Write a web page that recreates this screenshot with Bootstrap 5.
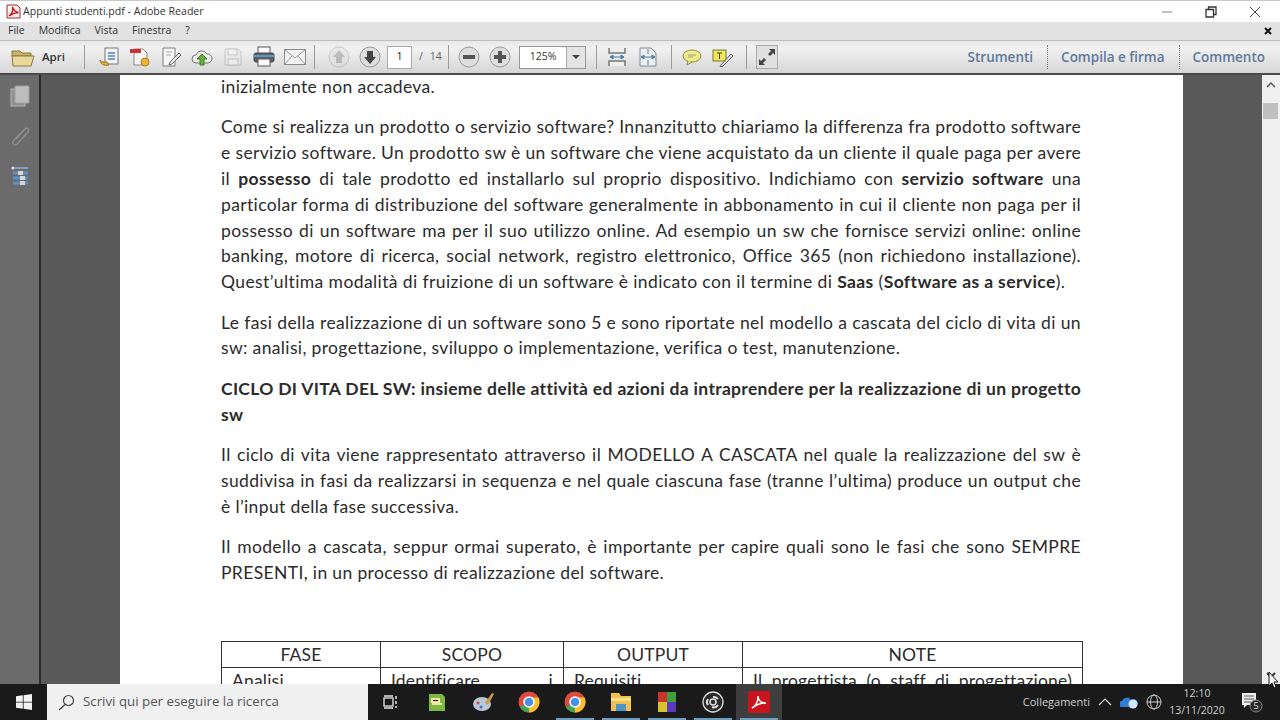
<!DOCTYPE html>
<html lang="it"><head><meta charset="utf-8"><title>Appunti studenti.pdf - Adobe Reader</title>
<link href="https://cdn.jsdelivr.net/npm/bootstrap@5.3.0/dist/css/bootstrap.min.css" rel="stylesheet">
<style>
html,body{height:100%;overflow:hidden;margin:0}
body{font-family:"Open Sans","Liberation Sans",sans-serif;background:#fff}
.shell{width:1280px;height:720px;position:relative}
.titlebar{height:22px;background:#fff;border-top:1px solid #c9c9c7;color:#333;font-size:10.6px;padding:0 3px 0 6px}
.titlebar svg{flex:none}
.titleicon{margin-right:2px}
.wbtn{width:44px;text-align:center;color:#444;line-height:1}
.menubar{height:18px;background:#e2e2e2;font-size:10.5px;color:#333;padding-left:8px;gap:14px}
.toolbar{height:35px;background:linear-gradient(#e9e9e9,#f1f1f1 25%,#d6d6d6);border-top:1px solid #bdbdbd;border-bottom:2px solid #4a4a4a;padding-left:7px}
.slot{width:31px;height:33px;flex:none}
.sepline{width:1px;height:24px;background:#9b9b9b;flex:none}
.sep-z{margin:0 4px 0 10px}
.apri{font-size:11.5px;font-weight:600;color:#333;width:42px;padding-left:4px;flex:none}
.pagebox{width:25px;height:23px;background:#fff;border:1px solid #aaa;font-size:10.5px;color:#222;flex:none;margin-left:2px}
.pageof{font-size:10.5px;color:#666;width:32px;padding-left:7px;flex:none;gap:7px}
.zoombox{width:67px;height:23px;background:#fff;border:1px solid #999;font-size:10.5px;color:#333;flex:none;margin-left:4px}
.zoomval{width:46px;text-align:center}
.zoomarrow{flex:1;height:100%;background:#e4e4e4;border-left:1px solid #aaa}
.tabs{font-size:13.5px;font-weight:600;color:#5f7a99;padding-right:15px;margin-left:auto}
.tabdiv{border-left:1px dotted #777;height:24px;margin:0 13px 0 14px}
.stage{height:609px;overflow:hidden}
.sidepanel{width:41px;background:#6b6b6b;border-right:2px solid #2b2b2b;flex:none;padding-top:10px;gap:18px}
.gutter{background:#595959;flex:none}
.gutter-l{width:79px}
.gutter-r{width:79px;margin-left:auto}
.sheet{width:1063px;background:#fff;flex:none}
.doc{width:860px;margin-left:101px;font-family:Lato,"Liberation Sans",sans-serif;font-size:17.5px;letter-spacing:.36px;line-height:25.8px;color:#2b2b2b;margin-top:-1px}
.tl{text-align:justify;text-align-last:justify;white-space:nowrap}
.tlast{white-space:nowrap}
.spaced{letter-spacing:.4px}
.boldpara{letter-spacing:.3px}
.para{margin-bottom:14.6px}
.doctable{width:861px;margin-top:55px;table-layout:fixed;border-collapse:collapse;color:#262626;margin-bottom:0}
.doctable td{border:1.5px solid #333;padding:1px 10px 0;height:25px;line-height:24px;background:#fff;color:#2b2b2b;letter-spacing:.2px}
.vscroll{width:18px;background:#f0f0f0;flex:none;padding:6px 0 5px}
.vthumb{width:15px;height:16px;background:#c0c0c0;margin:14px 0 0 1px}
.taskbar{height:36px;background:#1a1a1a;color:#ddd}
.winbox{width:47px;flex:none}
.searchbox{width:321px;height:100%;background:#f0f0f0;color:#555;font-size:13.3px;padding-left:11px;gap:8px;flex:none}
.tb{width:46px;height:100%;flex:none;position:relative}
.tb-active{background:#3e3e3e}
.tb-run::after{content:"";position:absolute;left:4px;right:4px;bottom:0;height:2px;background:#6f9dbd}
.tray{margin-left:auto;height:100%;font-size:11px;color:#ccc}
.clock{font-size:10.5px;line-height:17px;text-align:center;width:70px}
.cursorpin{position:absolute;left:1268px;top:671px}
</style></head><body>
<div class="shell d-flex flex-column">
 <div class="titlebar d-flex align-items-center">
  <svg width="15" height="15" viewBox="0 0 15 15" class="titleicon"><path d="M1 1h10l3 3v10H1z" fill="#fbeeee" stroke="#a52a2a"/><path d="M3 12c3-2 4-6 3.500-9 1 3 3 5 6 5.500-3 0-6 1-9.500 3.500z" fill="none" stroke="#c01a1a" stroke-width="1.300"/></svg>
  <span>Appunti studenti.pdf - Adobe Reader</span>
  <div class="ms-auto d-flex align-items-center">
   <div class="wbtn"><svg width="10" height="10"><path d="M0 5h10" stroke="#aaa" stroke-width="1.500"/></svg></div>
   <div class="wbtn"><svg width="12" height="12"><path d="M1 3.500h7.500V11H1zM3.500 3V1H11v7.500H9" fill="none" stroke="#333" stroke-width="1.300"/></svg></div>
   <div class="wbtn"><svg width="12" height="12"><path d="M1 1l10 10M11 1L1 11" stroke="#444" stroke-width="1"/></svg></div>
  </div>
 </div>
 <div class="menubar d-flex align-items-center">
  <span>File</span><span>Modifica</span><span>Vista</span><span>Finestra</span><span>?</span>
  <svg class="ms-auto me-2" width="8" height="8"><path d="M1 1l6 6M7 1L1 7" stroke="#111" stroke-width="2"/></svg>
 </div>
 <div class="toolbar d-flex align-items-center">
  <div class="slot d-flex align-items-center justify-content-center"><svg width="24" height="20" viewBox="0 0 24 20"><path d="M1 4h8l2 2h9v3H1z" fill="#c9b26a" stroke="#8a7a3a"/><path d="M1 9h22l-3 10H2z" fill="#ead99a" stroke="#8a7a3a"/></svg></div>
  <div class="apri">Apri</div>
  <div class="sepline ms-1 me-2"></div>
  <div class="slot d-flex align-items-center justify-content-center"><svg width="22" height="22" viewBox="0 0 22 22"><rect x="7" y="2" width="13" height="16" fill="#f4f4f4" stroke="#777"/><path d="M10 7h7M10 10h7M10 13h7" stroke="#4a7fc0" stroke-width="1.500"/><path d="M2 14c0 4 4 6 9 5l-2-3h-4c-1 0-2-1-3-2z" fill="#e5b33c" stroke="#9a7420"/></svg></div>
  <div class="slot d-flex align-items-center justify-content-center"><svg width="22" height="22" viewBox="0 0 22 22"><path d="M5 3h9l4 4v12H5z" fill="#f6f6f6" stroke="#888"/><rect x="1" y="3" width="11" height="4" fill="#c8333a"/><circle cx="16" cy="16" r="4" fill="#eeb335" stroke="#b08020"/></svg></div>
  <div class="slot d-flex align-items-center justify-content-center"><svg width="22" height="22" viewBox="0 0 22 22"><path d="M3 2h12v18H3z" fill="#f7f7f7" stroke="#7b7b7b"/><path d="M6 6h6M6 9h5" stroke="#aaa"/><path d="M10 16l9-9 2 2-9 9-3 1z" fill="#e9e9e9" stroke="#666"/></svg></div>
  <div class="slot d-flex align-items-center justify-content-center"><svg width="22" height="20" viewBox="0 0 22 20"><path d="M5 16a4 4 0 0 1 0-8 6 6 0 0 1 11-1 4.500 4.500 0 0 1 1 9z" fill="#eee" stroke="#777"/><path d="M11 7l5 5h-3v6H9v-6H6z" fill="#66b13c" stroke="#3d7f20"/></svg></div>
  <div class="slot d-flex align-items-center justify-content-center"><svg width="20" height="20" viewBox="0 0 20 20" opacity=".45"><path d="M2 2h13l3 3v13H2z" fill="#e8e8e8" stroke="#999"/><rect x="5" y="2" width="9" height="6" fill="#f6f6f6" stroke="#999"/><rect x="5" y="12" width="10" height="6" fill="#f6f6f6" stroke="#999"/></svg></div>
  <div class="slot d-flex align-items-center justify-content-center"><svg width="22" height="22" viewBox="0 0 22 22"><rect x="5" y="1" width="12" height="7" fill="#fff" stroke="#555"/><rect x="1" y="7" width="20" height="9" rx="2" fill="#5a6068" stroke="#444"/><rect x="5" y="13" width="12" height="7" fill="#fff" stroke="#555"/><path d="M1 10h20" stroke="#5e94c8" stroke-width="2"/></svg></div>
  <div class="slot d-flex align-items-center justify-content-center"><svg width="22" height="16" viewBox="0 0 22 16"><rect x=".5" y=".5" width="21" height="15" fill="#f2f2f2" stroke="#8a8a8a"/><path d="M1 1l10 8 10-8M1 15l7-8M21 15l-7-8" fill="none" stroke="#9a9a9a"/></svg></div>
  <div class="sepline ms-1 me-2"></div>
  <div class="slot d-flex align-items-center justify-content-center"><svg width="22" height="22" viewBox="0 0 22 22" opacity=".4"><circle cx="11" cy="11" r="10" fill="#dedede" stroke="#999"/><path d="M11 4l6 7h-3v6H8v-6H5z" fill="#777"/></svg></div>
  <div class="slot d-flex align-items-center justify-content-center"><svg width="22" height="22" viewBox="0 0 22 22"><circle cx="11" cy="11" r="10" fill="#dedede" stroke="#999"/><path d="M11 18l-6-7h3V5h6v6h3z" fill="#444"/></svg></div>
  <div class="pagebox d-flex align-items-center justify-content-center">1</div>
  <div class="pageof d-flex align-items-center"><span>/</span><span>14</span></div>
  <div class="sepline ms-1 me-1"></div>
  <div class="slot d-flex align-items-center justify-content-center"><svg width="22" height="22" viewBox="0 0 22 22"><circle cx="11" cy="11" r="10" fill="#dedede" stroke="#999"/><rect x="5" y="9" width="12" height="4" fill="#555"/></svg></div>
  <div class="slot d-flex align-items-center justify-content-center"><svg width="22" height="22" viewBox="0 0 22 22"><circle cx="11" cy="11" r="10" fill="#dedede" stroke="#999"/><path d="M9 5h4v4h4v4h-4v4H9v-4H5V9h4z" fill="#555"/></svg></div>
  <div class="zoombox d-flex align-items-center"><span class="zoomval">125%</span><span class="zoomarrow d-flex align-items-center justify-content-center"><svg width="8" height="5"><path d="M0 0h8L4 4z" fill="#444"/></svg></span></div>
  <div class="sepline sep-z"></div>
  <div class="slot d-flex align-items-center justify-content-center"><svg width="18" height="20" viewBox="0 0 18 20"><path d="M1 1v5h16V1M1 19v-5h16v5" fill="#eee" stroke="#777" stroke-width="1.500"/><path d="M2 10h14M2 10l3-2v4zM16 10l-3-2v4z" stroke="#4f7fae" fill="#4f7fae"/></svg></div>
  <div class="slot d-flex align-items-center justify-content-center"><svg width="18" height="20" viewBox="0 0 18 20"><path d="M1 1h11l5 5v13H1z" fill="#eee" stroke="#7a8a9a"/><path d="M2 10h14M2 10l3-2v4zM16 10l-3-2v4zM9 2v5M9 13v5" stroke="#4f7fae" fill="#4f7fae"/></svg></div>
  <div class="sepline ms-2 me-1"></div>
  <div class="slot d-flex align-items-center justify-content-center"><svg width="20" height="17" viewBox="0 0 20 17"><ellipse cx="10" cy="7" rx="9" ry="6" fill="#f3ee83" stroke="#8c8c50"/><path d="M6 12l-1 4 5-3" fill="#f3ee83" stroke="#8c8c50"/><path d="M6 6h8M6 8h5" stroke="#999"/></svg></div>
  <div class="slot d-flex align-items-center justify-content-center"><svg width="22" height="19" viewBox="0 0 22 19"><rect x="1" y="2" width="13" height="11" fill="#efe65a" stroke="#77773a"/><path d="M5 5h5M7.500 5v6" stroke="#444"/><path d="M9 17l10-11 2 2-10 10-3 1z" fill="#ddd" stroke="#666"/></svg></div>
  <div class="sepline ms-2 me-1"></div>
  <div class="slot d-flex align-items-center justify-content-center"><svg width="22" height="24" viewBox="0 0 22 24"><rect x=".5" y=".5" width="21" height="23" fill="#e0e0e0" stroke="#aaa"/><path d="M13 4h6v6l-2-2-3 3-2-2 3-3zM9 20H3v-6l2 2 3-3 2 2-3 3z" fill="#444"/></svg></div>
  <div class="tabs d-flex align-items-center"><span>Strumenti</span><span class="tabdiv"></span><span>Compila e firma</span><span class="tabdiv"></span><span>Commento</span></div>
 </div>
 <div class="stage d-flex">
  <div class="sidepanel d-flex flex-column align-items-center">
   <svg width="20" height="22" viewBox="0 0 20 22"><rect x="1" y="4" width="14" height="17" fill="#8f8f8f" stroke="#b5b5b5"/><rect x="5" y="1" width="14" height="17" rx="1" fill="#bdbdbd" stroke="#a0a0a0"/></svg>
   <svg width="20" height="22" viewBox="0 0 20 22"><path d="M16 3L4 15c-3 4 1 6 3 4L18 7c2-3-1-5-3-3L6 14" fill="none" stroke="#909090" stroke-width="1.300"/></svg>
   <svg width="20" height="22" viewBox="0 0 20 22"><path d="M5 3h13" stroke="#8fb0d8" stroke-width="1.500"/><circle cx="3" cy="3" r="1.500" fill="#dfe7f0"/><path d="M3 8h15M3 13h15M3 18h15" stroke="#5f8fc8" stroke-width="3"/><rect x="8" y="6" width="5" height="4" fill="#d6d6d6"/><rect x="10" y="11" width="5" height="4" fill="#d6d6d6"/><rect x="10" y="16" width="5" height="4" fill="#d6d6d6"/></svg>
  </div>
  <div class="gutter gutter-l"></div>
  <div class="sheet">
   <div class="doc">
    <div class="para tlast">inizialmente non accadeva.</div>
    <div class="para">
     <div class="tl">Come si realizza un prodotto o servizio software?  Innanzitutto chiariamo la differenza fra prodotto software</div>
     <div class="tl">e servizio software. Un prodotto sw è un software che viene acquistato da un cliente il quale paga per avere</div>
     <div class="tl">il <b>possesso</b> di tale prodotto ed installarlo sul proprio dispositivo. Indichiamo con <b>servizio software</b> una</div>
     <div class="tl">particolar forma di distribuzione del software generalmente in abbonamento in cui il cliente non paga per il</div>
     <div class="tl">possesso di un software ma per il suo utilizzo online. Ad esempio un sw che fornisce servizi online: online</div>
     <div class="tl">banking, motore di ricerca, social network, registro elettronico, Office 365 (non richiedono installazione).</div>
     <div class="tlast spaced">Quest’ultima modalità di fruizione di un software è indicato con il termine di <b>Saas</b> (<b>Software as a service</b>).</div>
    </div>
    <div class="para">
     <div class="tl">Le fasi della realizzazione di un software sono 5 e sono riportate nel modello a cascata del ciclo di vita di un</div>
     <div class="tlast">sw: analisi, progettazione, sviluppo o implementazione, verifica o test, manutenzione.</div>
    </div>
    <div class="para fw-bold boldpara">
     <div class="tl">CICLO DI VITA DEL SW: insieme delle attività ed azioni da intraprendere per la realizzazione di un progetto</div>
     <div class="tlast">sw</div>
    </div>
    <div class="para">
     <div class="tl">Il ciclo di vita viene rappresentato attraverso il MODELLO A CASCATA nel quale la realizzazione del sw è</div>
     <div class="tl">suddivisa in fasi da realizzarsi in sequenza e nel quale ciascuna fase (tranne l’ultima) produce un output che</div>
     <div class="tlast">è l’input della fase successiva.</div>
    </div>
    <div class="para">
     <div class="tl">Il modello a cascata, seppur ormai superato, è importante per capire quali sono le fasi che sono SEMPRE</div>
     <div class="tlast">PRESENTI, in un processo di realizzazione del software.</div>
    </div>
    <table class="table doctable">
     <colgroup><col style="width:159px"><col style="width:183px"><col style="width:179px"><col style="width:340px"></colgroup>
     <tbody>
      <tr class="text-center"><td>FASE</td><td>SCOPO</td><td>OUTPUT</td><td>NOTE</td></tr>
      <tr><td>Analisi</td><td class="tl">Identificare i</td><td>Requisiti</td><td class="tl">Il progettista (o staff di progettazione)</td></tr>
     </tbody>
    </table>
   </div>
  </div>
  <div class="gutter gutter-r"></div>
  <div class="vscroll d-flex flex-column align-items-start">
   <svg class="ms-1" width="10" height="8"><path d="M1 6l4-4 4 4" fill="none" stroke="#555" stroke-width="1.500"/></svg>
   <div class="vthumb"></div>
   <svg class="ms-1 mt-auto" width="10" height="8"><path d="M1 2l4 4 4-4" fill="none" stroke="#333" stroke-width="2"/></svg>
  </div>
 </div>
 <div class="taskbar d-flex align-items-center">
  <div class="winbox d-flex align-items-center justify-content-center"><svg width="16" height="16" viewBox="0 0 16 16"><path d="M0 2.300l6.800-1v6.400H0zM7.600 1.200L16 0v7.700H7.600zM0 8.400h6.800v6.400L0 13.800zM7.600 8.400H16V16l-8.400-1.200z" fill="#f2f2f2"/></svg></div>
  <div class="searchbox d-flex align-items-center"><svg width="17" height="17" viewBox="0 0 17 17"><circle cx="10.500" cy="6.500" r="5" fill="none" stroke="#444" stroke-width="1.200"/><path d="M7 10.500L1 16" stroke="#444" stroke-width="1.300"/></svg><span>Scrivi qui per eseguire la ricerca</span></div>
  <div class="tb d-flex align-items-center justify-content-center"><svg width="16" height="14" viewBox="0 0 16 14"><rect x="1" y="3" width="9" height="8" fill="none" stroke="#e6e6e6" stroke-width="1.300"/><path d="M1 1h9M1 13h9M13 1v3M13 6v3M13 11v2" stroke="#e6e6e6" stroke-width="1.500"/></svg></div>
  <div class="tb d-flex align-items-center justify-content-center"><svg width="18" height="20" viewBox="0 0 18 20"><path d="M1 2h13l3 3v14H1z" fill="#7cb842"/><path d="M4 7h7v3H4zM4 12h10" stroke="#f3e6a0" stroke-width="2"/></svg></div>
  <div class="tb d-flex align-items-center justify-content-center"><svg width="22" height="20" viewBox="0 0 22 20"><ellipse cx="10" cy="12" rx="9" ry="7" fill="#b9c6d6"/><circle cx="6" cy="11" r="1.500" fill="#d44"/><circle cx="9" cy="15" r="1.500" fill="#37b"/><path d="M13 11l7-10 2 1-6 11z" fill="#c89a4a"/></svg></div>
  <div class="tb d-flex align-items-center justify-content-center"><svg width="22" height="22" viewBox="0 0 22 22"><circle cx="11" cy="11" r="10.500" fill="#dd4b3e"/><path d="M11 11L2 16a10.500 10.500 0 0 0 9 5.500z" fill="#3aa757"/><path d="M11 6.500h9.500A10.500 10.500 0 0 1 11 21.500z" fill="#fbc02d"/><circle cx="11" cy="11" r="5" fill="#4a90e2" stroke="#fff" stroke-width="1.500"/></svg></div>
  <div class="tb tb-run d-flex align-items-center justify-content-center"><svg width="22" height="22" viewBox="0 0 22 22"><circle cx="11" cy="11" r="10.500" fill="#dd4b3e"/><path d="M11 11L2 16a10.500 10.500 0 0 0 9 5.500z" fill="#3aa757"/><path d="M11 6.500h9.500A10.500 10.500 0 0 1 11 21.500z" fill="#fbc02d"/><circle cx="11" cy="11" r="5" fill="#4a90e2" stroke="#fff" stroke-width="1.500"/></svg></div>
  <div class="tb tb-run d-flex align-items-center justify-content-center"><svg width="22" height="20" viewBox="0 0 22 20"><path d="M1 1h8l2 3h10v15H1z" fill="#f2c14e"/><rect x="1" y="6" width="20" height="3" fill="#fbe08a"/><rect x="6" y="12" width="10" height="7" fill="#4f94c9"/></svg></div>
  <div class="tb tb-run d-flex align-items-center justify-content-center"><svg width="20" height="22" viewBox="0 0 20 22"><rect x="1" y="1" width="9" height="10" fill="#c8352c"/><rect x="10" y="1" width="9" height="10" fill="#3ea03f"/><rect x="1" y="11" width="9" height="10" fill="#d9c22e"/><rect x="10" y="11" width="9" height="10" fill="#5b39c0"/></svg></div>
  <div class="tb tb-run d-flex align-items-center justify-content-center"><svg width="22" height="22" viewBox="0 0 22 22"><circle cx="11" cy="11" r="10" fill="#2b2b2b" stroke="#ddd" stroke-width="1.300"/><circle cx="11" cy="11" r="3" fill="none" stroke="#ddd" stroke-width="1.500"/><path d="M11 6a5 5 0 0 1 5 2M6 14a5 5 0 0 1 0-6M16 14a5 5 0 0 1-6 2" fill="none" stroke="#ddd" stroke-width="2"/></svg></div>
  <div class="tb tb-active tb-run d-flex align-items-center justify-content-center"><svg width="22" height="22" viewBox="0 0 22 22"><rect width="22" height="22" rx="2" fill="#c8141c"/><path d="M4 17c4-2 6-7 6-12 0 5 3 7 8 7-5 0-10 2-14 5z" fill="none" stroke="#fff" stroke-width="1.500"/></svg></div>
  <div class="tray d-flex align-items-center">
   <span class="me-1">Collegamenti</span>
   <svg class="ms-1" width="14" height="8"><path d="M1 7l6-6 6 6" fill="none" stroke="#ddd" stroke-width="1.200"/></svg>
   <svg class="ms-2" width="18" height="14" viewBox="0 0 18 14"><path d="M2 12a3 3 0 0 1 0-6 5 5 0 0 1 9-1 4 4 0 0 1 5 7z" fill="#2f7fd6"/><circle cx="13" cy="9" r="4.500" fill="#cfe6ff"/></svg>
   <svg class="ms-2" width="16" height="16" viewBox="0 0 16 16"><circle cx="8" cy="8" r="7" fill="none" stroke="#ccc"/><ellipse cx="8" cy="8" rx="3.500" ry="7" fill="none" stroke="#ccc"/><path d="M1 8h14" stroke="#ccc"/></svg>
   <div class="clock me-2"><div>12:10</div><div>13/11/2020</div></div>
   <svg class="me-3" width="24" height="24" viewBox="0 0 24 24"><path d="M2 3h14v12h-9l-3 3v-3H2z" fill="#eee"/><path d="M4 6h10M4 9h10M4 12h7" stroke="#555"/><circle cx="16" cy="16" r="6" fill="#2a2a2a" stroke="#888"/><text x="16" y="19" font-size="9" text-anchor="middle" fill="#ddd">5</text></svg>
  </div>
 </div>
 <svg class="cursorpin" width="12" height="18" viewBox="0 0 12 18"><path d="M1 1v14l3-3 2 5 2-1-2-5h4z" fill="#fff" stroke="#111"/></svg>
</div>
</body></html>
